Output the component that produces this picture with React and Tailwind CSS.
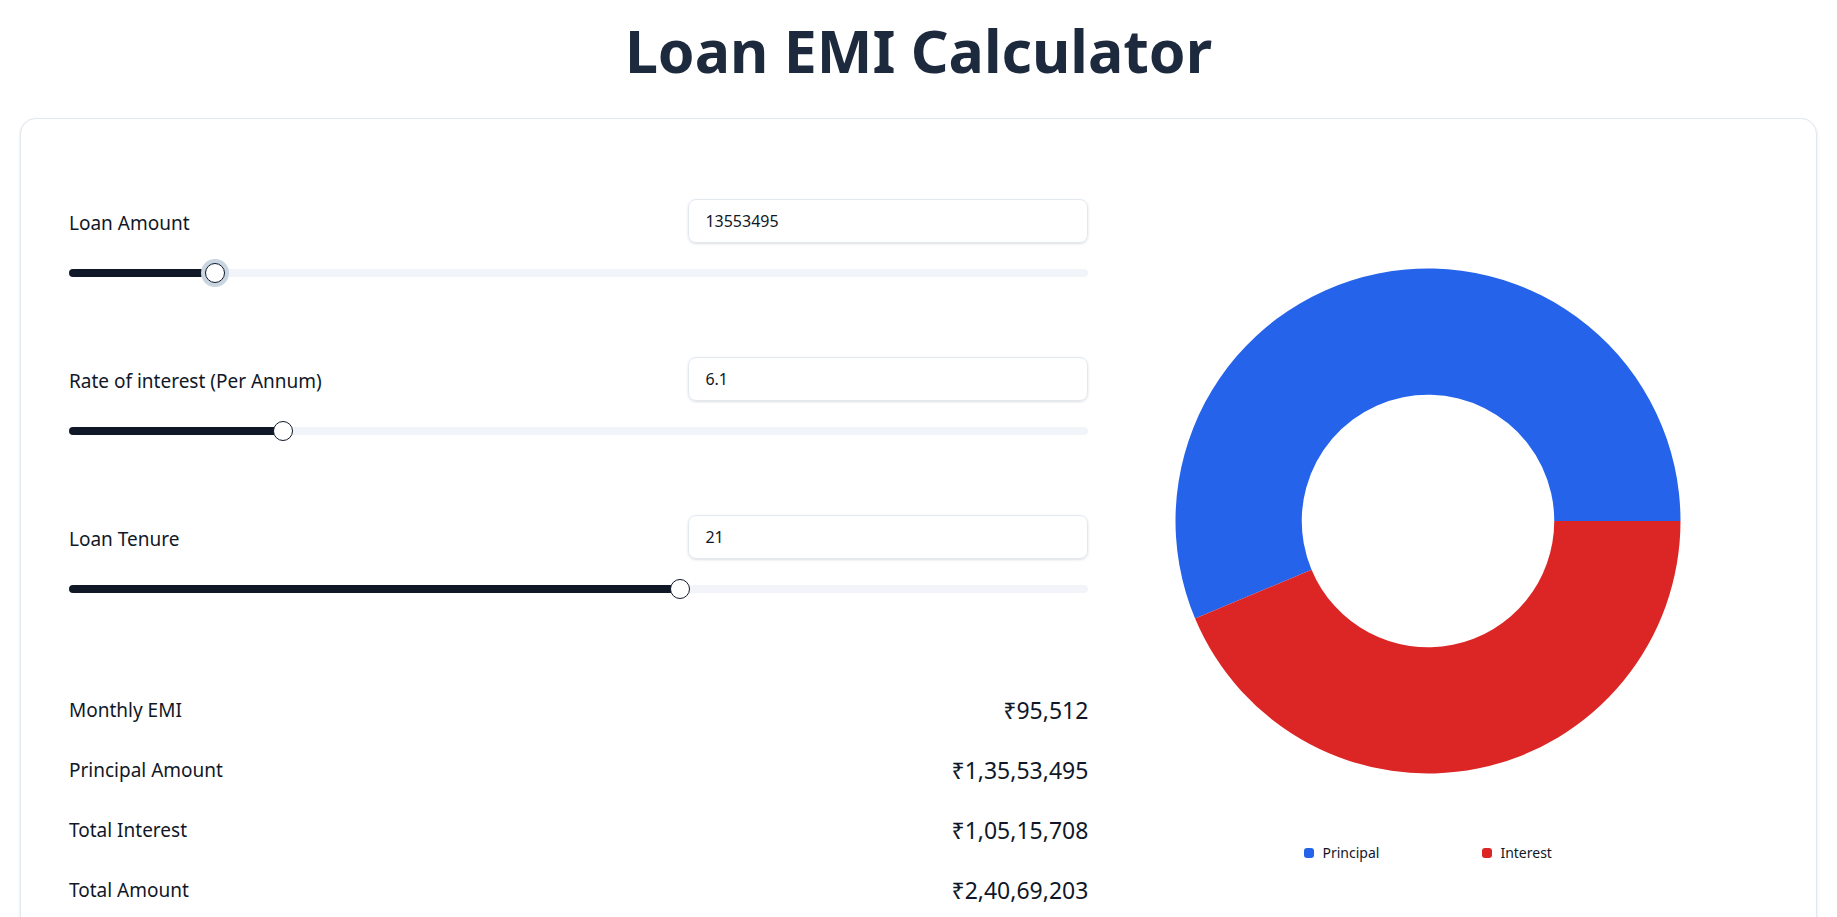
import React from "react";

const principal = 13553495;
const interest = 10515708;
const total = principal + interest;

const inputs = [
  { label: "Loan Amount", value: "13553495", pct: 14.3, focused: true },
  { label: "Rate of interest (Per Annum)", value: "6.1", pct: 21 },
  { label: "Loan Tenure", value: "21", pct: 59.9 },
];

const results = [
  { label: "Monthly EMI", value: "₹95,512" },
  { label: "Principal Amount", value: "₹1,35,53,495" },
  { label: "Total Interest", value: "₹1,05,15,708" },
  { label: "Total Amount", value: "₹2,40,69,203" },
];

// point on a circle, angle in degrees counter-clockwise from 3 o'clock
const pt = (cx, cy, r, deg) => {
  const a = (deg * Math.PI) / 180;
  return [cx + r * Math.cos(a), cy - r * Math.sin(a)];
};

const arc = (cx, cy, R, r, start, end) => {
  const large = end - start > 180 ? 1 : 0;
  const [x1, y1] = pt(cx, cy, R, start);
  const [x2, y2] = pt(cx, cy, R, end);
  const [x3, y3] = pt(cx, cy, r, end);
  const [x4, y4] = pt(cx, cy, r, start);
  return `M${x1} ${y1} A${R} ${R} 0 ${large} 0 ${x2} ${y2} L${x3} ${y3} A${r} ${r} 0 ${large} 1 ${x4} ${y4} Z`;
};

const Slider = ({ pct, focused }) => (
  <div className="relative h-5 mt-5 flex items-center">
    <div className="h-2 w-full rounded-full bg-slate-100"></div>
    <div
      className="absolute left-0 h-2 rounded-full bg-gray-900"
      style={{ width: `${pct}%` }}
    ></div>
    <div
      className={`absolute h-5 w-5 -translate-x-1/2 rounded-full border-[1.5px] border-gray-900 bg-white ${
        focused ? "ring-4 ring-slate-300" : ""
      }`}
      style={{ left: `${pct}%` }}
    ></div>
  </div>
);

const Donut = () => {
  const cx = 340;
  const cy = 260;
  const R = 252.5;
  const r = 126.25;
  const split = (principal / total) * 360;
  return (
    <svg width="680" height="520" viewBox="0 0 680 520" className="block">
      <path d={arc(cx, cy, R, r, 0, split)} fill="#2563eb" />
      <path d={arc(cx, cy, R, r, split, 360)} fill="#dc2626" />
    </svg>
  );
};

export default function App() {
  return (
    <div className="min-h-screen bg-white px-5 pt-5 font-['Noto_Sans',sans-serif] text-gray-900">
      {/* Title */}
      <h1 className="text-center text-[59px] leading-[60px] font-bold text-slate-800 mb-[38px]">
        Loan EMI Calculator
      </h1>

      {/* Card */}
      <div className="rounded-2xl border border-slate-200 bg-white p-12 shadow-sm">
        <div className="grid grid-cols-5">
          {/* Left side */}
          <div className="col-span-3 pt-8">
            <div className="flex flex-col gap-[74px]">
              {inputs.map((item) => (
                <div key={item.label}>
                  <div className="flex items-center justify-between">
                    <label className="text-[19px] leading-7 pt-1">{item.label}</label>
                    <input
                      type="text"
                      defaultValue={item.value}
                      className="h-11 w-[400px] rounded-lg border border-slate-200 px-4 text-base text-gray-900 shadow-sm outline-none"
                    />
                  </div>
                  <Slider pct={item.pct} focused={item.focused} />
                </div>
              ))}
            </div>

            {/* Results */}
            <div className="mt-[96px] flex flex-col gap-[30px]">
              {results.map((row) => (
                <div
                  key={row.label}
                  className="flex items-center justify-between leading-[30px]"
                >
                  <span className="text-[19px]">{row.label}</span>
                  <span className="text-[23px]">{row.value}</span>
                </div>
              ))}
            </div>
          </div>

          {/* Right side: chart */}
          <div className="col-span-2 flex flex-col items-center pt-[94px]">
            <Donut />
            <div className="mt-[62px] flex items-center justify-center gap-[103px] text-sm leading-5 text-gray-900">
              <div className="flex items-center gap-2">
                <span className="h-2.5 w-2.5 rounded-[3px] bg-[#2563eb]"></span>
                <span>Principal</span>
              </div>
              <div className="flex items-center gap-2">
                <span className="h-2.5 w-2.5 rounded-[3px] bg-[#dc2626]"></span>
                <span>Interest</span>
              </div>
            </div>
          </div>
        </div>
      </div>
    </div>
  );
}
